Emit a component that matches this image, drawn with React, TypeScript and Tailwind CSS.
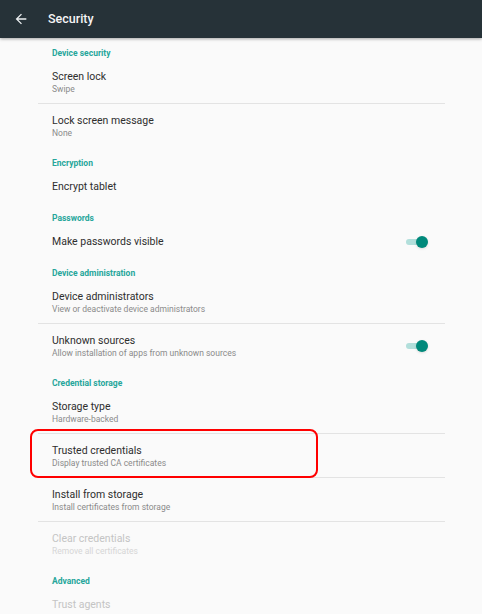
import React from 'react'

type Item = {
    title: string
    sub?: string
    toggle?: boolean
    disabled?: boolean
    divider?: boolean
}

type Section = {
    name: string
    items: Item[]
}

const sections: Section[] = [
    {
        name: 'Device security',
        items: [
            { title: 'Screen lock', sub: 'Swipe', divider: true },
            { title: 'Lock screen message', sub: 'None' },
        ],
    },
    { name: 'Encryption', items: [{ title: 'Encrypt tablet' }] },
    { name: 'Passwords', items: [{ title: 'Make passwords visible', toggle: true }] },
    {
        name: 'Device administration',
        items: [
            { title: 'Device administrators', sub: 'View or deactivate device administrators', divider: true },
            { title: 'Unknown sources', sub: 'Allow installation of apps from unknown sources', toggle: true },
        ],
    },
    {
        name: 'Credential storage',
        items: [
            { title: 'Storage type', sub: 'Hardware-backed', divider: true },
            { title: 'Trusted credentials', sub: 'Display trusted CA certificates', divider: true },
            { title: 'Install from storage', sub: 'Install certificates from storage', divider: true },
            { title: 'Clear credentials', sub: 'Remove all certificates', disabled: true },
        ],
    },
    {
        name: 'Advanced',
        items: [{ title: 'Trust agents', disabled: true }],
    },
]

function Toggle() {
    return (
        <div className="relative w-[22px] h-[12px] flex items-center">
            <div className="w-[17px] h-[6px] rounded-full bg-[#b2dfdb]" />
            <div className="absolute right-0 top-0 w-[12px] h-[12px] rounded-full bg-[#00897b] shadow-sm" />
        </div>
    )
}

function Row({ item }: { item: Item }) {
    const two = !!item.sub
    return (
        <div className={`flex flex-col ${two ? 'h-[44px]' : 'h-[33px]'}`}>
            <div className="flex flex-1 items-center justify-between pl-[52px] pr-[54px]">
                <div className="flex flex-col">
                    <span className={`text-[10.5px] leading-[14px] ${item.disabled ? 'text-[#c4c4c4]' : 'text-[#2e2e2e]'}`}>{item.title}</span>
                    {item.sub && (
                        <span className={`text-[8.5px] leading-[10px] ${item.disabled ? 'text-[#d6d6d6]' : 'text-[#8a8a8a]'}`}>{item.sub}</span>
                    )}
                </div>
                {item.toggle && <Toggle />}
            </div>
            {item.divider && <div className="ml-[38px] w-[407px] h-px bg-[#e3e3e3]" />}
        </div>
    )
}

export default function App() {
    return (
        <div className="relative w-[482px] h-[614px] overflow-hidden bg-[#fafafa]" style={{ fontFamily: 'Roboto, "Liberation Sans", sans-serif' }}>
            <div className="relative z-10 flex items-center h-[38px] bg-[#263238] shadow-[0_1px_3px_rgba(0,0,0,0.35)]">
                <svg width="16" height="16" viewBox="0 0 24 24" className="ml-[13px] fill-[#eceff1]">
                    <path d="M20 11H7.83l5.59-5.59L12 4l-8 8 8 8 1.41-1.41L7.83 13H20v-2z" />
                </svg>
                <span className="ml-[19px] text-[12.5px] font-medium text-[#f5f5f5]">Security</span>
            </div>

            <div className="flex flex-col">
                {sections.map((s) => (
                    <div key={s.name} className="flex flex-col">
                        <div className="h-[22px] pl-[52px] pt-[9px]">
                            <span className="block text-[8.5px] leading-[12px] font-bold text-[#26a69a]">{s.name}</span>
                        </div>
                        {s.items.map((it) => (
                            <Row key={it.title} item={it} />
                        ))}
                    </div>
                ))}
            </div>

            {/* annotation highlight */}
            <div className="absolute left-[30px] top-[429px] w-[288px] h-[49px] rounded-[8px] border-[2.5px] border-[#ff0000]" />
        </div>
    )
}
